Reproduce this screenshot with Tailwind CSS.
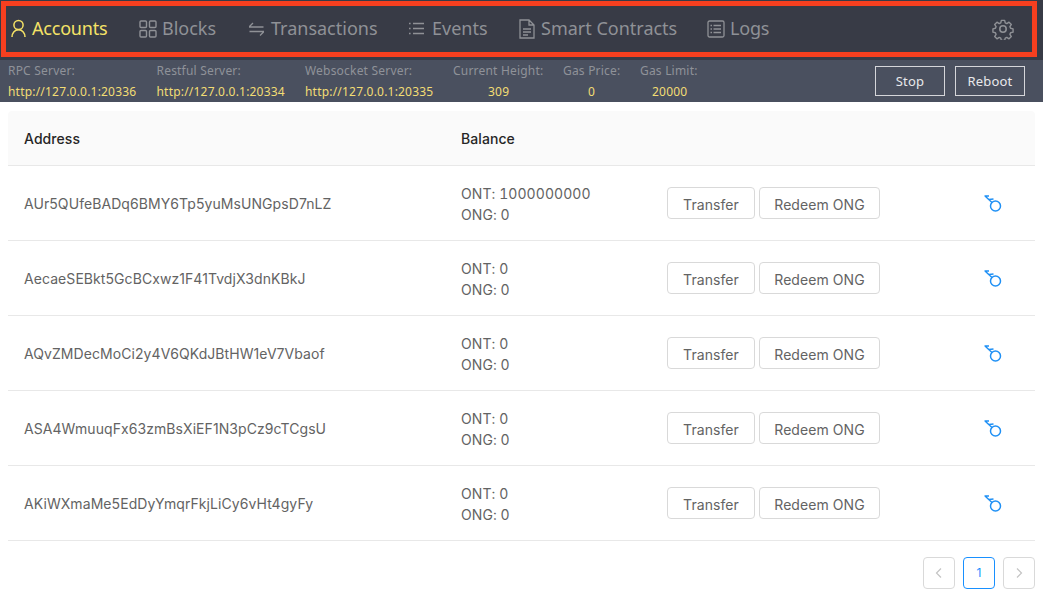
<!DOCTYPE html>
<html lang="en">
<head>
<meta charset="UTF-8">
<title>Accounts</title>
<script src="https://cdn.jsdelivr.net/npm/@tailwindcss/browser@4"></script>
</head>
<body class="bg-white font-['Inter',sans-serif] w-[1043px] h-[595px] overflow-hidden relative">
  <!-- Nav -->
  <nav class="h-[60px] bg-[#383b46] flex items-center pl-[11px] pr-[29px] pb-[3px] font-['Noto_Sans',sans-serif] text-[18px] text-[#8f9196]">
    <a class="flex items-center gap-[6px] text-[#f5e266] tracking-[-0.2px] w-[128px]">
      <svg width="15" height="19" viewBox="0 0 15 19" fill="none" stroke="currentColor" stroke-width="1.5"><circle cx="7.5" cy="6" r="4.6"/><path d="M1 18c0-4 2.5-7.2 6.5-7.2S14 14 14 18"/></svg>
      Accounts
    </a>
    <a class="flex items-center gap-[5px] w-[110px]">
      <svg width="18" height="18" viewBox="0 0 18 18" fill="none" stroke="currentColor" stroke-width="1.4"><rect x="1" y="1" width="6.5" height="6.5" rx="1"/><rect x="10.5" y="1" width="6.5" height="6.5" rx="1"/><rect x="1" y="10.5" width="6.5" height="6.5" rx="1"/><rect x="10.5" y="10.5" width="6.5" height="6.5" rx="1"/></svg>
      Blocks
    </a>
    <a class="flex items-center gap-[7px] w-[160px]">
      <svg width="15" height="14" viewBox="0 0 15 14" fill="none" stroke="currentColor" stroke-width="1.3"><path d="M0 5h14.500M0 5l4-4M15 9.500H.5M15 9.500l-4 4"/></svg>
      Transactions
    </a>
    <a class="flex items-center gap-[8px] w-[110px]">
      <svg width="15" height="13" viewBox="0 0 15 13" fill="none" stroke="currentColor" stroke-width="1.3"><path d="M4 1.500h11M4 6.500h11M4 11.500h11M0 1.500h1.600M0 6.500h1.600M0 11.500h1.600"/></svg>
      Events
    </a>
    <a class="flex items-center gap-[6px] w-[188px]">
      <svg width="16" height="20" viewBox="0 0 16 20" fill="none" stroke="currentColor" stroke-width="1.3"><path d="M1 1h9l5 5v13H1zM10 1v5h5M4 10h8M4 13h8M4 16h5"/></svg>
      Smart Contracts
    </a>
    <a class="flex items-center gap-[5px] tracking-[-0.2px]">
      <svg width="18" height="18" viewBox="0 0 18 18" fill="none" stroke="currentColor" stroke-width="1.3"><rect x="1" y="1" width="16" height="16" rx="1.500"/><path d="M6.500 5.500h7.500M6.500 9h7.500M6.500 12.500h7.500M3.500 5.500h1.500M3.500 9h1.500M3.500 12.500h1.500"/></svg>
      Logs
    </a>
    <svg class="ml-auto" width="22" height="22" viewBox="0 0 24 24" fill="none" stroke="currentColor" stroke-width="1.700" stroke-linejoin="round"><circle cx="12" cy="12" r="3.500"/><path d="M10 1.500h4l.7 3.100 1.900.8 2.700-1.700 2.800 2.800-1.700 2.700.8 1.900 3 .7v4l-3 .7-.8 1.900 1.700 2.700-2.800 2.800-2.700-1.700-1.900.8-.7 3h-4l-.7-3-1.900-.8-2.700 1.700-2.800-2.800 1.700-2.700-.8-1.900-3-.7v-4l3-.7.8-1.900-1.700-2.700 2.800-2.800 2.700 1.700 1.900-.8z" transform="translate(1.200 1.200) scale(.9)"/></svg>
  </nav>

  <!-- Node info -->
  <div class="h-[42px] bg-[#4a505f] flex items-start pl-[8px] pr-[18px] font-['Noto_Sans',sans-serif] text-[12px] tracking-[0.2px] leading-[21px]">
    <div class="w-[148.500px]"><p class="text-[#8f9299]">RPC Server:</p><p class="text-[#f2dd74]">http://127.0.0.1:20336</p></div>
    <div class="w-[148.500px]"><p class="text-[#8f9299]">Restful Server:</p><p class="text-[#f2dd74]">http://127.0.0.1:20334</p></div>
    <div class="w-[148px]"><p class="text-[#8f9299]">Websocket Server:</p><p class="text-[#f2dd74]">http://127.0.0.1:20335</p></div>
    <div class="w-[110px]"><p class="text-[#8f9299]">Current Height:</p><p class="text-[#f2dd74] pl-[35px]">309</p></div>
    <div class="w-[77px]"><p class="text-[#8f9299]">Gas Price:</p><p class="text-[#f2dd74] pl-[25px]">0</p></div>
    <div><p class="text-[#8f9299]">Gas Limit:</p><p class="text-[#f2dd74] pl-[12px]">20000</p></div>
    <div class="ml-auto flex gap-[10px] pt-[6px]">
      <button class="w-[70px] h-[30px] pt-[1px] border border-[#d5d6da] text-[#e8e9eb] text-[13px]">Stop</button>
      <button class="w-[70px] h-[30px] pt-[1px] border border-[#d5d6da] text-[#e8e9eb] text-[13px]">Reboot</button>
    </div>
  </div>

  <!-- Accounts table -->
  <div class="mx-[8px] mt-[9px] w-[1027px] text-[14px] text-[#636363] tracking-[0.07px]">
    <div class="h-[55px] bg-[#fafafa] border-b border-[#e8e8e8] rounded-t-[4px] flex items-center pl-[16px] text-[#262626] font-medium">
      <span class="w-[437px]">Address</span><span>Balance</span>
    </div>

    <div class="h-[75px] border-b border-[#e8e8e8] flex items-center pl-[16px]">
      <span class="w-[437px] pt-[1px]">AUr5QUfeBADq6BMY6Tp5yuMsUNGpsD7nLZ</span>
      <div class="w-[206px] pt-[1px] leading-[21px] tabular-nums"><p>ONT: 1000000000</p><p>ONG: 0</p></div>
      <button class="w-[88px] h-[32px] pt-[2px] border border-[#d9d9d9] rounded-[4px] mr-[4px]">Transfer</button>
      <button class="w-[121px] h-[32px] pt-[2px] border border-[#d9d9d9] rounded-[4px]">Redeem ONG</button>
      <svg class="ml-[104px] mt-[2px]" width="18" height="18" viewBox="0 0 18 18" fill="none" stroke="#1f90f5" stroke-width="1.500"><circle cx="11.500" cy="11" r="5"/><path d="M8 7.500L1 1M.5 1H5M5 4.500L9.500 4"/></svg>
    </div>
    <div class="h-[75px] border-b border-[#e8e8e8] flex items-center pl-[16px]">
      <span class="w-[437px] pt-[1px]">AecaeSEBkt5GcBCxwz1F41TvdjX3dnKBkJ</span>
      <div class="w-[206px] pt-[1px] leading-[21px] tabular-nums"><p>ONT: 0</p><p>ONG: 0</p></div>
      <button class="w-[88px] h-[32px] pt-[2px] border border-[#d9d9d9] rounded-[4px] mr-[4px]">Transfer</button>
      <button class="w-[121px] h-[32px] pt-[2px] border border-[#d9d9d9] rounded-[4px]">Redeem ONG</button>
      <svg class="ml-[104px] mt-[2px]" width="18" height="18" viewBox="0 0 18 18" fill="none" stroke="#1f90f5" stroke-width="1.500"><circle cx="11.500" cy="11" r="5"/><path d="M8 7.500L1 1M.5 1H5M5 4.500L9.500 4"/></svg>
    </div>
    <div class="h-[75px] border-b border-[#e8e8e8] flex items-center pl-[16px]">
      <span class="w-[437px] pt-[1px]">AQvZMDecMoCi2y4V6QKdJBtHW1eV7Vbaof</span>
      <div class="w-[206px] pt-[1px] leading-[21px] tabular-nums"><p>ONT: 0</p><p>ONG: 0</p></div>
      <button class="w-[88px] h-[32px] pt-[2px] border border-[#d9d9d9] rounded-[4px] mr-[4px]">Transfer</button>
      <button class="w-[121px] h-[32px] pt-[2px] border border-[#d9d9d9] rounded-[4px]">Redeem ONG</button>
      <svg class="ml-[104px] mt-[2px]" width="18" height="18" viewBox="0 0 18 18" fill="none" stroke="#1f90f5" stroke-width="1.500"><circle cx="11.500" cy="11" r="5"/><path d="M8 7.500L1 1M.5 1H5M5 4.500L9.500 4"/></svg>
    </div>
    <div class="h-[75px] border-b border-[#e8e8e8] flex items-center pl-[16px]">
      <span class="w-[437px] pt-[1px]">ASA4WmuuqFx63zmBsXiEF1N3pCz9cTCgsU</span>
      <div class="w-[206px] pt-[1px] leading-[21px] tabular-nums"><p>ONT: 0</p><p>ONG: 0</p></div>
      <button class="w-[88px] h-[32px] pt-[2px] border border-[#d9d9d9] rounded-[4px] mr-[4px]">Transfer</button>
      <button class="w-[121px] h-[32px] pt-[2px] border border-[#d9d9d9] rounded-[4px]">Redeem ONG</button>
      <svg class="ml-[104px] mt-[2px]" width="18" height="18" viewBox="0 0 18 18" fill="none" stroke="#1f90f5" stroke-width="1.500"><circle cx="11.500" cy="11" r="5"/><path d="M8 7.500L1 1M.5 1H5M5 4.500L9.500 4"/></svg>
    </div>
    <div class="h-[75px] border-b border-[#e8e8e8] flex items-center pl-[16px]">
      <span class="w-[437px] pt-[1px]">AKiWXmaMe5EdDyYmqrFkjLiCy6vHt4gyFy</span>
      <div class="w-[206px] pt-[1px] leading-[21px] tabular-nums"><p>ONT: 0</p><p>ONG: 0</p></div>
      <button class="w-[88px] h-[32px] pt-[2px] border border-[#d9d9d9] rounded-[4px] mr-[4px]">Transfer</button>
      <button class="w-[121px] h-[32px] pt-[2px] border border-[#d9d9d9] rounded-[4px]">Redeem ONG</button>
      <svg class="ml-[104px] mt-[2px]" width="18" height="18" viewBox="0 0 18 18" fill="none" stroke="#1f90f5" stroke-width="1.500"><circle cx="11.500" cy="11" r="5"/><path d="M8 7.500L1 1M.5 1H5M5 4.500L9.500 4"/></svg>
    </div>

    <!-- Pagination -->
    <div class="flex justify-end gap-[8px] mt-[16px]">
      <div class="w-[32px] h-[32px] border border-[#d9d9d9] rounded-[4px] flex items-center justify-center">
        <svg width="8" height="10" viewBox="0 0 8 10" fill="none" stroke="#c4c4c4" stroke-width="1.200"><path d="M6 .5L1.500 5 6 9.500"/></svg>
      </div>
      <div class="w-[32px] h-[32px] border border-[#1890ff] rounded-[4px] flex items-center justify-center text-[#1890ff] text-[12px]">1</div>
      <div class="w-[32px] h-[32px] border border-[#d9d9d9] rounded-[4px] flex items-center justify-center">
        <svg width="8" height="10" viewBox="0 0 8 10" fill="none" stroke="#c4c4c4" stroke-width="1.200"><path d="M2 .5L6.500 5 2 9.500"/></svg>
      </div>
    </div>
  </div>

  <!-- Red annotation frame over the nav -->
  <div class="absolute left-[1px] top-[1px] w-[1036px] h-[56px] border-[5px] border-[#f73f1f]"></div>
</body>
</html>
